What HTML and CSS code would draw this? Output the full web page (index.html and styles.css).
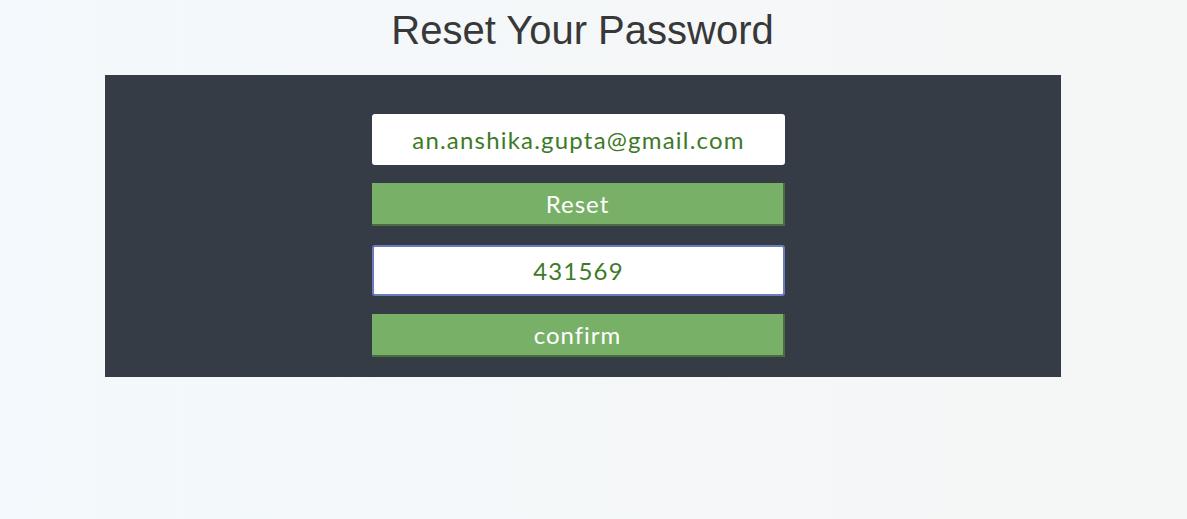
FILE: index.html
```html
<!DOCTYPE html>
<html>
<head>
<meta charset="utf-8">
<link rel="stylesheet" href="styles.css">
</head>
<body>
<h1 class="title">Reset Your Password</h1>
<div class="panel">
  <form class="form">
    <input class="field" type="text" value="an.anshika.gupta@gmail.com">
    <button class="btn" type="button">Reset</button>
    <input class="field field-focus" type="text" value="431569">
    <button class="btn" type="button">confirm</button>
  </form>
</div>
</body>
</html>
```
FILE: styles.css
```css
html, body {
  margin: 0;
  padding: 0;
}
body {
  width: 1187px;
  height: 519px;
  background: linear-gradient(90deg, #f3f9fc 0%, #f5f7f8 60%, #f5f6f6 100%);
  font-family: "Lato", "Open Sans", sans-serif;
  overflow: hidden;
}
.title {
  margin: 0;
  padding: 8px 22px 0 0;
  height: 75px;
  box-sizing: border-box;
  text-align: center;
  font-family: "Liberation Sans", Arial, sans-serif;
  font-weight: normal;
  font-size: 40px;
  line-height: 45px;
  color: #383838;
}
.panel {
  margin-left: 105px;
  width: 956px;
  height: 302px;
  background: #353c46;
  box-sizing: border-box;
  padding-top: 39px;
}
.form {
  width: 413px;
  margin-left: 267px;
  display: flex;
  flex-direction: column;
}
.field {
  height: 51px;
  box-sizing: border-box;
  border: 2px solid #ffffff;
  border-radius: 3px;
  background: #ffffff;
  text-align: center;
  font-family: "Lato", "Open Sans", sans-serif;
  font-size: 24px;
  letter-spacing: 1.2px;
  color: #3d7a27;
  outline: none;
  padding: 0;
  margin: 0 0 18px 0;
}
.field-focus {
  border-color: #6a7cbc;
  margin-top: 1px;
}
.btn {
  height: 43px;
  box-sizing: border-box;
  border: none;
  border-right: 2px solid #4b6b40;
  border-bottom: 2px solid #4b6b40;
  background: #78b068;
  color: #ffffff;
  font-family: "Lato", "Open Sans", sans-serif;
  font-size: 24px;
  letter-spacing: 1px;
  padding: 0;
  margin: 0 0 18px 0;
}
```
